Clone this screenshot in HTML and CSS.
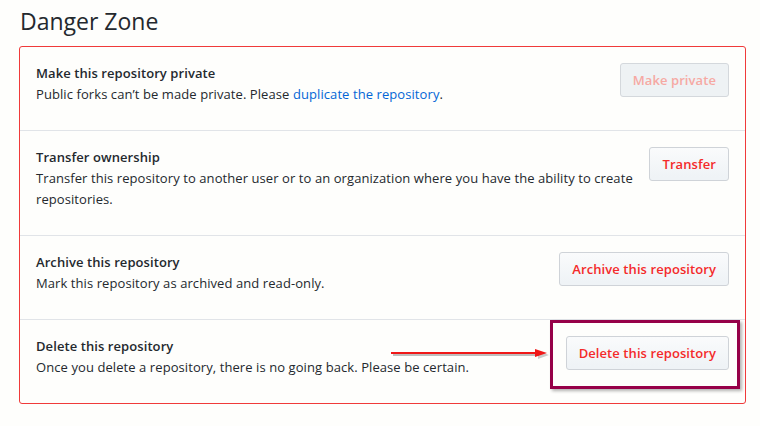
FILE: index.html
```html
<!DOCTYPE html>
<html lang="en">
<head>
<meta charset="utf-8">
<title>Danger Zone</title>
<link rel="stylesheet" href="styles.css">
</head>
<body>
<div class="page">
  <h2 class="heading">Danger Zone</h2>
  <div class="danger-box">
    <div class="row">
      <div class="info">
        <strong class="title">Make this repository private</strong>
        <p class="desc">Public forks can’t be made private. Please <a href="#" class="link">duplicate the repository</a>.</p>
      </div>
      <button class="btn btn-disabled" disabled>Make private</button>
    </div>
    <div class="row">
      <div class="info">
        <strong class="title">Transfer ownership</strong>
        <p class="desc">Transfer this repository to another user or to an organization where you have the ability to create repositories.</p>
      </div>
      <button class="btn">Transfer</button>
    </div>
    <div class="row">
      <div class="info">
        <strong class="title">Archive this repository</strong>
        <p class="desc">Mark this repository as archived and read-only.</p>
      </div>
      <button class="btn">Archive this repository</button>
    </div>
    <div class="row row-last">
      <div class="info">
        <strong class="title">Delete this repository</strong>
        <p class="desc">Once you delete a repository, there is no going back. Please be certain.</p>
      </div>
      <div class="highlight-wrap">
        <button class="btn">Delete this repository</button>
        <span class="highlight"></span>
        <svg class="arrow" width="164" height="12" viewBox="0 0 164 12">
          <line x1="2" y1="7" x2="148" y2="7" stroke="rgba(0,0,0,0.25)" stroke-width="2"/>
          <polygon points="147,3 158,7 147,11" fill="rgba(0,0,0,0.2)"/>
          <line x1="0" y1="5" x2="146" y2="5" stroke="#f01818" stroke-width="2"/>
          <polygon points="144,1 156,5 144,9" fill="#f01818"/>
        </svg>
      </div>
    </div>
  </div>
</div>
</body>
</html>
```

FILE: styles.css
```css
* { box-sizing: border-box; }

html, body {
  margin: 0;
  padding: 0;
  background: #fefefc;
}

body {
  font-family: "Open Sans", "Noto Sans", sans-serif;
  font-size: 13px;
  letter-spacing: 0.08px;
  color: #24292e;
}

.page {
  padding: 6px 0 0 19px;
  width: 746px;
}

.heading {
  margin: 0 0 10px 1px;
  font-size: 23px;
  font-weight: 400;
  line-height: 30px;
  letter-spacing: 0;
  color: #24292e;
}

.danger-box {
  border: 1px solid #f03a3a;
  border-radius: 3px;
  width: 727px;
}

.row {
  display: flex;
  align-items: flex-start;
  padding: 16px 16px 16px 16px;
  border-top: 1px solid #e1e4e8;
}

.row:first-child { border-top: none; }

.info {
  flex: 1;
  min-width: 0;
  padding-bottom: 9px;
}

.title {
  display: block;
  font-weight: 600;
  line-height: 21px;
}

.desc {
  margin: 0;
  line-height: 21px;
  max-width: 600px;
}

.link {
  color: #0366d6;
  text-decoration: none;
}

.btn {
  flex: none;
  margin-left: 16px;
  height: 34px;
  padding: 0 12px;
  font-family: inherit;
  font-size: 13px;
  font-weight: 600;
  letter-spacing: 0.08px;
  color: #f42a2a;
  background: linear-gradient(#fafbfc, #eff3f6 90%);
  border: 1px solid #cfd3d8;
  border-radius: 3px;
  line-height: 20px;
}

.btn-disabled {
  color: #f6a9a3;
  background: #eef2f4;
  border-color: #d4d8dc;
}

.highlight-wrap {
  position: relative;
  flex: none;
  margin-left: 16px;
}

.highlight-wrap .btn { margin-left: 0; }

.highlight {
  position: absolute;
  left: -16px;
  top: -16px;
  right: -11px;
  bottom: -19px;
  border: 3px solid #960048;
  box-shadow: 2px 2px 3px rgba(0, 0, 0, 0.3);
  pointer-events: none;
}

.arrow {
  position: absolute;
  left: -175px;
  top: 12px;
  pointer-events: none;
}
```
